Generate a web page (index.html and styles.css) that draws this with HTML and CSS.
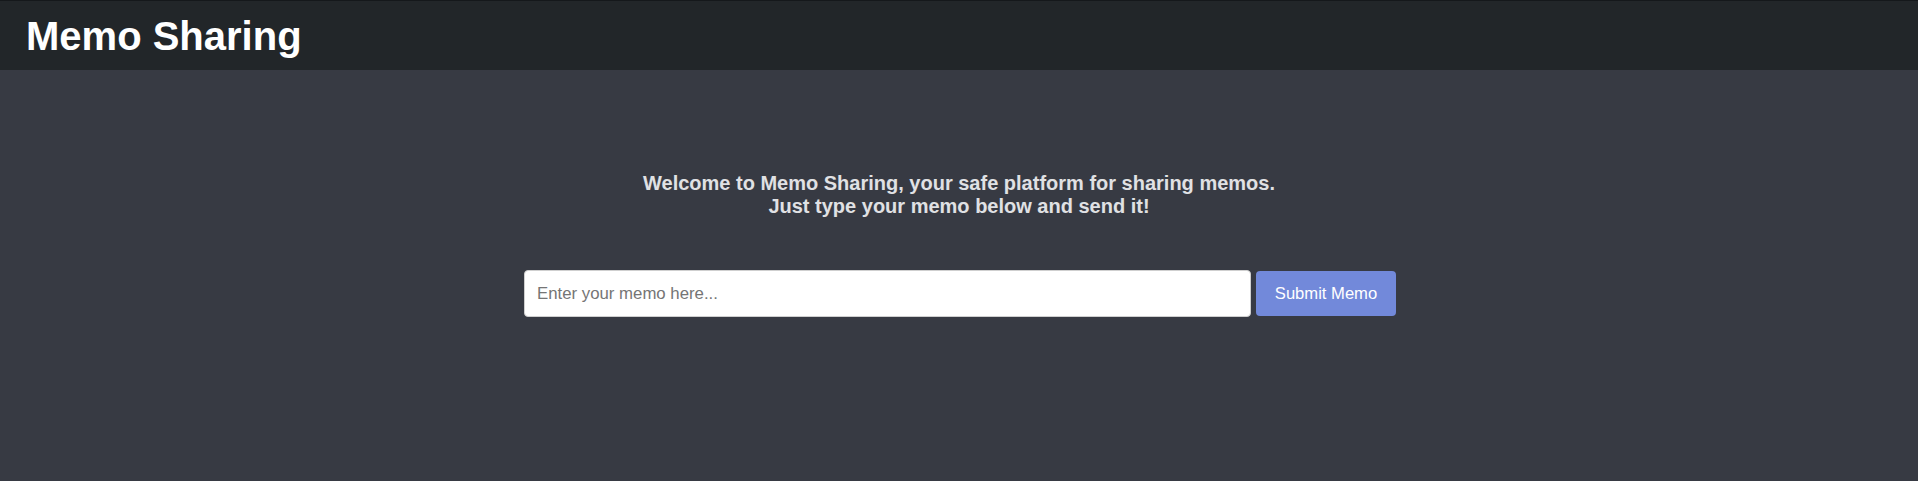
FILE: index.html
```html
<!DOCTYPE html>
<html lang="en">
<head>
<meta charset="utf-8">
<title>Memo Sharing</title>
<link rel="stylesheet" href="styles.css">
</head>
<body>
<header class="topbar">
  <h1 class="brand">Memo Sharing</h1>
</header>
<main class="content">
  <p class="intro">Welcome to Memo Sharing, your safe platform for sharing memos.<br>Just type your memo below and send it!</p>
  <form class="memo-form">
    <input class="memo-input" type="text" placeholder="Enter your memo here...">
    <button class="memo-button" type="button">Submit Memo</button>
  </form>
</main>
</body>
</html>
```

FILE: styles.css
```css
html, body {
  margin: 0;
  padding: 0;
  height: 100%;
}
body {
  background: #373a43;
  font-family: "Liberation Sans", Arial, sans-serif;
  color: #e3e3e3;
}
.topbar {
  background: #222629;
  border-top: 1px solid #15181b;
  padding: 12px 26px 11px;
}
.brand {
  margin: 0;
  font-size: 40px;
  font-weight: bold;
  line-height: 46px;
  color: #ffffff;
}
.content {
  padding-top: 102px;
}
.intro {
  margin: 0;
  text-align: center;
  font-size: 20px;
  font-weight: bold;
  line-height: 23px;
  color: #e0e1e4;
}
.memo-form {
  display: flex;
  justify-content: center;
  align-items: center;
  gap: 5px;
  margin-top: 52px;
  padding-left: 2px;
}
.memo-input {
  box-sizing: border-box;
  width: 727px;
  height: 47px;
  padding: 0 12px;
  border: 1px solid #cfcfcf;
  border-radius: 4px;
  background: #ffffff;
  font-family: "Liberation Sans", Arial, sans-serif;
  font-size: 16.8px;
  color: #333;
}
.memo-input::placeholder {
  color: #757575;
}
.memo-button {
  box-sizing: border-box;
  width: 140px;
  height: 45px;
  border: none;
  border-radius: 4px;
  background: #7289da;
  color: #ffffff;
  font-family: "Liberation Sans", Arial, sans-serif;
  font-size: 16.6px;
  cursor: pointer;
}
```
